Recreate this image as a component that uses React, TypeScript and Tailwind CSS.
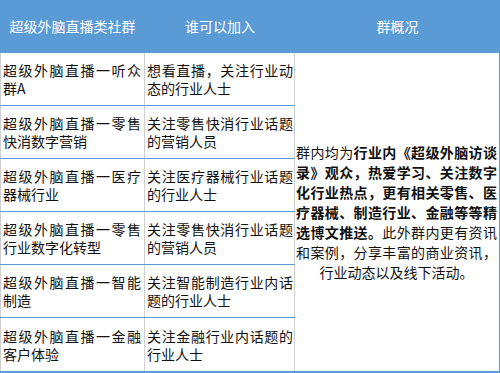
const rows: [string, string][] = [
  ["超级外脑直播一听众群A", "想看直播，关注行业动态的行业人士"],
  ["超级外脑直播一零售快消数字营销", "关注零售快消行业话题的营销人员"],
  ["超级外脑直播一医疗器械行业", "关注医疗器械行业话题的行业人士"],
  ["超级外脑直播一零售行业数字化转型", "关注零售快消行业话题的营销人员"],
  ["超级外脑直播一智能制造", "关注智能制造行业内话题的行业人士"],
  ["超级外脑直播一金融客户体验", "关注金融行业内话题的行业人士"],
];

export default function App() {
  return (
    <div className="w-[500px] h-[373px] bg-white text-[#111] font-['Noto_Sans_CJK_SC',sans-serif] border-b-2 border-[#5b9bd5] flex flex-col">
      {/* Header */}
      <div className="h-[53px] flex bg-[#5b9bd5] text-white text-[14px]">
        <div className="w-[145px] flex items-center justify-center">超级外脑直播类社群</div>
        <div className="w-[150px] flex items-center justify-center">谁可以加入</div>
        <div className="flex-1 flex items-center justify-center">群概况</div>
      </div>

      {/* Body */}
      <div className="flex flex-1 text-[14px]">
        <div className="w-[295px] flex flex-col">
          {rows.map(([name, who], i) => (
            <div
              key={i}
              className={
                "h-[53px] flex " + (i < rows.length - 1 ? "border-b border-[#5b9bd5]" : "")
              }
            >
              <div className="w-[145px] border-l border-r border-[#cfcfcf] pl-[2px] pr-[3px] flex items-center">
                <p className="w-full leading-[18px] text-justify">{name}</p>
              </div>
              <div className="w-[150px] border-r border-[#cfcfcf] pl-[2px] pr-[1px] flex items-center">
                <p className="w-full leading-[18px] text-justify">{who}</p>
              </div>
            </div>
          ))}
        </div>
        <div className="flex-1 border-r border-[#5b9bd5] pl-[1px] pr-[2px] flex items-center">
          <p className="w-full leading-[20px] text-justify [text-align-last:center]">
            群内均为
            <b className="font-bold">
              行业内《超级外脑访谈录》观众，热爱学习、关注数字化行业热点，更有相关零售、医疗器械、制造行业、金融等等精选博文推送。
            </b>
            此外群内更有资讯和案例，分享丰富的商业资讯，行业动态以及线下活动。
          </p>
        </div>
      </div>
    </div>
  );
}
